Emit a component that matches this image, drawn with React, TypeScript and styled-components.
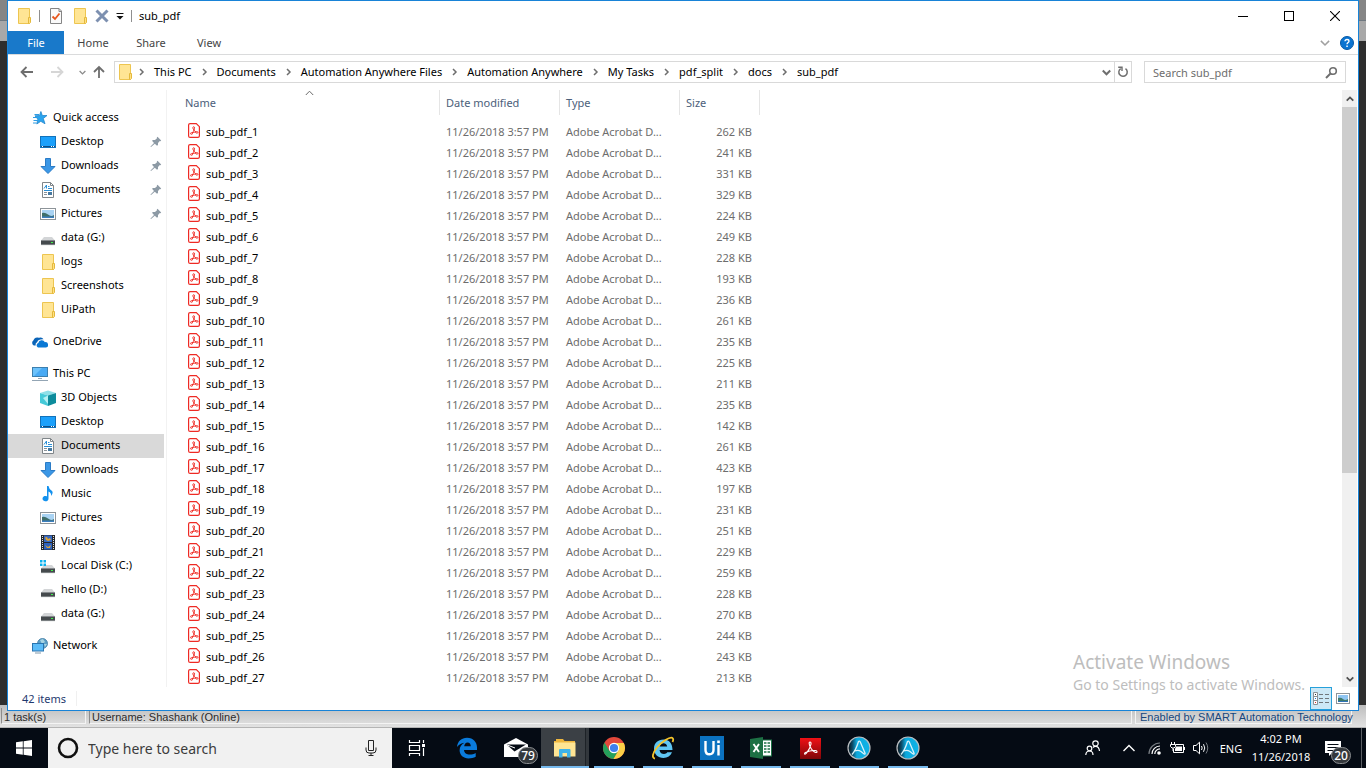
import React from "react";
import styled, { createGlobalStyle, css } from "styled-components";

const UI = `"Noto Sans", "Open Sans", sans-serif`;

const GlobalStyle = createGlobalStyle`
  *, *::before, *::after { box-sizing: border-box; }
  html, body { margin: 0; padding: 0; }
  body { font-family: ${UI}; font-size: 11px; color: #000; overflow: hidden; }
  button, input { font: inherit; color: inherit; margin: 0; padding: 0; border: 0; background: none; }
  a { color: inherit; text-decoration: none; }
  ul, ol { list-style: none; margin: 0; padding: 0; }
  svg { display: block; flex: none; }
`;

/* ---------- desktop and the application behind the window ---------- */

const Screen = styled.div`
  display: flex;
  flex-direction: column;
  height: 100vh;
  min-height: 400px;
`;

const Desktop = styled.div`
  position: relative;
  flex: 1;
  min-height: 0;
  display: flex;
  flex-direction: column;
  background: #2e2e2e;
`;

const BackToolbar = styled.div`
  height: 21px;
  background: #858585;
  border-bottom: 1px solid #6f7880;
`;

const BackTabs = styled.div`
  height: 20px;
  background: #a8a8a8;
`;

const BackCanvas = styled.div`
  flex: 1;
`;

const BackStatus = styled.footer`
  display: flex;
  gap: 3px;
  height: 23px;
  padding: 3px 14px 3px 1px;
  background: linear-gradient(#bdbdbd, #e2e2e2);
  border-bottom: 1px solid #b4b4b4;
  font-family: "Liberation Sans", Arial, sans-serif;
  font-size: 11px;
  line-height: 18px;
  color: #2b2b2b;
`;

const StatusCell = styled.div<{ $w?: number; $link?: boolean }>`
  ${(p) => (p.$w ? `width: ${p.$w}px; flex: none;` : "flex: 1;")}
  padding-left: ${(p) => (p.$link ? 4 : 2)}px;
  border-left: 1px solid #8c8c8c;
  border-right: 1px solid #f4f4f4;
  border-bottom: 1px solid #f4f4f4;
  white-space: nowrap;
  ${(p) => p.$link && "color: #16467c; border-left-color: #f4f4f4;"}
`;

/* ---------- explorer window ---------- */

const Window = styled.main`
  position: absolute;
  inset: 0 7px 17px 7px;
  display: flex;
  flex-direction: column;
  background: #fff;
  border: 1px solid #1883d7;
`;

const TitleBar = styled.header`
  display: flex;
  align-items: center;
  height: 30px;
  padding-left: 8px;
`;

const QuickTools = styled.div`
  display: flex;
  align-items: center;
  gap: 7px;
`;

const ToolButton = styled.button<{ $w?: number }>`
  display: flex;
  align-items: center;
  justify-content: center;
  width: ${(p) => p.$w ?? 16}px;
  height: 22px;
`;

const Divider = styled.span`
  width: 1px;
  height: 12px;
  background: #8f8f8f;
`;

const WindowTitle = styled.h1`
  margin: 0 0 0 7px;
  font-size: 11px;
  line-height: 16px;
  font-weight: 400;
`;

const WindowButtons = styled.div`
  display: flex;
  margin-left: auto;
`;

const WindowButton = styled.button`
  display: grid;
  place-items: center;
  width: 46px;
  height: 29px;
`;

const Ribbon = styled.nav`
  display: flex;
  align-items: center;
  height: 24px;
  border-bottom: 1px solid #dadbdc;
`;

const Tab = styled.button<{ $active?: boolean }>`
  height: 23px;
  width: ${(p) => (p.$active ? 56 : 58)}px;
  color: #444;
  ${(p) => p.$active && "background: #1979ca; color: #fff;"}
`;

const RibbonEnd = styled.div`
  display: flex;
  align-items: center;
  gap: 10px;
  margin-left: auto;
  padding-right: 4px;
`;

const AddressRow = styled.div`
  display: flex;
  align-items: center;
  height: 35px;
  padding: 0 12px 1px 11px;
`;

const NavButton = styled.button<{ $w: number }>`
  display: grid;
  place-items: center;
  width: ${(p) => p.$w}px;
  height: 22px;
`;

const AddressBox = styled.div`
  display: flex;
  align-items: center;
  flex: 1;
  min-width: 0;
  height: 22px;
  padding-left: 2px;
  border: 1px solid #d9d9d9;
`;

const Crumbs = styled.ol`
  display: flex;
  align-items: center;
  flex: 1;
  min-width: 0;
  margin-left: -4px;
  overflow: hidden;
  white-space: nowrap;
`;

const Crumb = styled.li`
  display: flex;
  align-items: center;
  line-height: 16px;
`;

const CrumbArrow = styled.svg`
  width: 25px;
  height: 8px;
`;

const RefreshButton = styled.button`
  display: grid;
  place-items: center;
  width: 17px;
  height: 20px;
  border-left: 1px solid #d9d9d9;
`;

const SearchBox = styled.label`
  display: flex;
  align-items: center;
  width: 202px;
  height: 22px;
  margin-left: 12px;
  padding: 0 7px 0 8px;
  border: 1px solid #d9d9d9;
`;

const SearchInput = styled.input`
  flex: 1;
  min-width: 0;
  outline: none;
  &::placeholder { color: #6d6d6d; opacity: 1; }
`;

const Body = styled.div`
  display: flex;
  flex: 1;
  min-height: 0;
`;

const Sidebar = styled.nav`
  display: flex;
  flex-direction: column;
  gap: 8px;
  width: 159px;
  padding: 16px 2px 0 0;
  border-right: 1px solid #f2f2f2;
  overflow: hidden;
`;

const NavLink = styled.a<{ $child?: boolean; $selected?: boolean }>`
  display: flex;
  align-items: center;
  gap: 5px;
  height: 24px;
  padding-left: ${(p) => (p.$child ? 32 : 24)}px;
  padding-right: 2px;
  white-space: nowrap;
  ${(p) => p.$selected && "background: #d9d9d9;"}
`;

const NavLabel = styled.span`
  line-height: 16px;
  padding-bottom: 2px;
`;

const Pin = styled.svg`
  margin-left: auto;
`;

const ListPane = styled.section`
  flex: 1;
  min-width: 0;
  overflow: hidden;
`;

const FileTable = styled.table`
  table-layout: fixed;
  width: 593px;
  border-collapse: separate;
  border-spacing: 0;
`;

const HeadCell = styled.th<{ $first?: boolean }>`
  position: relative;
  height: 25px;
  padding: 0 0 0 ${(p) => (p.$first ? 18 : 6)}px;
  border-right: 1px solid #e5e5e5;
  text-align: left;
  font-weight: 400;
  color: #4c607a;
`;

const SortMark = styled.svg`
  position: absolute;
  top: 0;
  right: 125px;
`;

const Cell = styled.td<{ $name?: boolean; $right?: boolean }>`
  height: 21px;
  padding: 0 8px 0 6px;
  line-height: 16px;
  white-space: nowrap;
  color: #6d6d6d;
  ${(p) => p.$name && "padding-left: 21px; color: #000;"}
  ${(p) => p.$right && "text-align: right;"}
`;

const RowSpacer = styled.td`
  height: 6px;
  padding: 0;
`;

const FileLink = styled.a`
  display: flex;
  align-items: center;
  gap: 6px;
`;

const Scrollbar = styled.div`
  display: flex;
  flex-direction: column;
  width: 15px;
  margin-right: 1px;
  background: #f0f0f0;
`;

const ScrollButton = styled.button`
  display: grid;
  place-items: center;
  height: 17px;
`;

const ScrollTrack = styled.div`
  flex: 1;
`;

const ScrollThumb = styled.div`
  height: 65%;
  background: #cdcdcd;
`;

const StatusBar = styled.footer`
  display: flex;
  align-items: center;
  height: 23px;
  padding: 0 4px 0 14px;
  color: #1f3a6e;
`;

const ItemCount = styled.span`
  padding-right: 10px;
  border-right: 1px solid #f0f0f0;
`;

const ViewSwitch = styled.div`
  display: flex;
  margin-left: auto;
`;

const ViewButton = styled.button<{ $on?: boolean }>`
  display: grid;
  place-items: center;
  width: 22px;
  height: 23px;
  ${(p) => p.$on && "background: #cce8f6; border: 1px solid #26a0da;"}
`;

const Watermark = styled.aside`
  position: absolute;
  right: 47px;
  bottom: 15px;
  width: 238px;
  color: #bdbdbd;
  font-size: 14px;
  line-height: 20px;
  white-space: nowrap;
  pointer-events: none;
`;

const WatermarkTitle = styled.strong`
  display: block;
  font-size: 19px;
  line-height: 25px;
  font-weight: 400;
`;

/* ---------- taskbar ---------- */

const Taskbar = styled.footer`
  display: flex;
  height: 40px;
  background: #050b14;
  color: #fff;
`;

const StartButton = styled.button`
  display: grid;
  place-items: center;
  width: 48px;
`;

const TaskSearch = styled.label`
  display: flex;
  align-items: center;
  gap: 8px;
  width: 344px;
  padding: 0 15px 0 8px;
  background: #f1f1f1;
`;

const TaskSearchInput = styled.input`
  flex: 1;
  min-width: 0;
  font-size: 14px;
  outline: none;
  &::placeholder { color: #3c3c3c; opacity: 1; }
`;

const Apps = styled.div`
  display: flex;
  gap: 1px;
  padding-left: 3px;
`;

const AppButton = styled.button<{ $open?: boolean; $active?: boolean }>`
  position: relative;
  display: grid;
  place-items: center;
  width: 48px;
  height: 40px;
  ${(p) => p.$active && "background: linear-gradient(90deg, #3b4045 44px, #1d2227 44px, #1d2227 45px, #32373c 45px);"}
  ${(p) =>
    (p.$open || p.$active) &&
    css`
      &::after {
        content: "";
        position: absolute;
        bottom: 0;
        left: ${p.$active ? 0 : 4}px;
        right: ${p.$active ? 0 : 4}px;
        height: 2px;
        background: #76b9ed;
      }
    `}
`;

const Badge = styled.span`
  position: absolute;
  right: 2px;
  bottom: 4px;
  min-width: 20px;
  height: 17px;
  padding: 0 2px;
  border: 1px solid #8b8e91;
  border-radius: 9px;
  background: #34383c;
  color: #fff;
  font-size: 12px;
  line-height: 15px;
  font-weight: 500;
  text-align: center;
`;

const Tray = styled.div`
  display: flex;
  align-items: center;
  margin-left: auto;
  padding-right: 4px;
`;

const TrayButton = styled.button<{ $w: number }>`
  position: relative;
  display: grid;
  place-items: center;
  width: ${(p) => p.$w}px;
  height: 40px;
  font-size: 11px;
`;

const Clock = styled.button`
  width: 64px;
  height: 40px;
  font-size: 11px;
  line-height: 18px;
  white-space: nowrap;
`;

const ShowDesktop = styled.button`
  width: 1px;
  height: 40px;
  margin-left: 8px;
  background: #5a5e63;
`;

/* ---------- icons ---------- */

const FolderIcon = () => (
  <svg width="16" height="16" viewBox="0 0 16 16">
    <path d="M2.500.5H13.500V15.500H2.500Z" fill="#ffe594" stroke="#edc550" />
    <path d="M12.500 9.500H14.500V14.500L13.500 15.500H12.500Z" fill="#ffe084" stroke="#e4b93c" />
  </svg>
);

const StarIcon = () => (
  <svg width="16" height="16" viewBox="0 0 16 16">
    <path d="M8.900 1.500 10.300 5.500 15 5.500 11.300 8.500 13 13.800 8.800 11.300 4.800 14 5.800 9.200 3 5.800 7.500 5.500Z" fill="#2ba4ee" stroke="#2387cd" strokeWidth=".8" />
    <path d="M2.500 4.500H7M1 7.500H5M1.500 10.500H5.500M1 13H4.500" stroke="#2d9ce4" strokeWidth="1.200" />
  </svg>
);

const DesktopIcon = () => (
  <svg width="16" height="16" viewBox="0 0 16 16">
    <rect x=".5" y="2.500" width="15" height="11" fill="#1ba0fb" stroke="#1272ba" />
    <path d="M1 12.500H15" stroke="#0d4d86" />
    <path d="M2 12.500H3M11 12.500H12M13 12.500H14" stroke="#fff" />
  </svg>
);

const DownloadsIcon = () => (
  <svg width="16" height="16" viewBox="0 0 16 16">
    <path d="M5.500.5H10.500V8.500H15L8 15.500 1 8.500H5.500Z" fill="#3b97e6" stroke="#2a7bc6" />
  </svg>
);

const DocumentsIcon = () => (
  <svg width="16" height="16" viewBox="0 0 16 16">
    <path d="M2.500.5H10.500L13.500 3.500V15.500H2.500Z" fill="#fff" stroke="#7f8589" />
    <path d="M10.500.5V3.500H13.500" fill="none" stroke="#7f8589" />
    <path d="M4 6.500 6.500 3V6.500M8 4.500H9.500M8 6.500H12M4 8.500H12" stroke="#2a8fd6" fill="none" />
    <path d="M4 10.500H7M4 12.500H7" stroke="#8a9299" />
    <rect x="8" y="10" width="4" height="3" fill="#47789e" />
  </svg>
);

const PicturesIcon = () => (
  <svg width="16" height="16" viewBox="0 0 16 16">
    <rect x=".5" y="2.500" width="15" height="11" fill="#fff" stroke="#8d9499" />
    <rect x="2" y="4" width="12" height="8" fill="#a9d3f3" />
    <path d="M2 7Q5 6 8 8.500T14 9V12H2Z" fill="#3f6f6b" />
    <path d="M2 10.500H14V12H2Z" fill="#3c7fc0" />
  </svg>
);

const Disk = () => (
  <g>
    <path d="M4 7H12L15 10.500H1Z" fill="#d3d5d7" />
    <rect x="1" y="10" width="14" height="5" fill="#454a4d" />
    <path d="M1 10.500H15M1 14.700H15" stroke="#a2a6a9" strokeWidth=".7" />
    <rect x="11" y="12" width="2" height="1" fill="#3ff04a" />
  </g>
);

const DriveIcon = () => (
  <svg width="16" height="16" viewBox="0 0 16 16">
    <Disk />
  </svg>
);

const SystemDriveIcon = () => (
  <svg width="16" height="16" viewBox="0 0 16 16">
    <Disk />
    <path d="M0 2H2.500V4.500H0ZM3.500 2H6V4.500H3.500ZM0 5.500H2.500V8H0ZM3.500 5.500H6V8H3.500Z" fill="#08b0ee" />
  </svg>
);

const OneDriveIcon = () => (
  <svg width="16" height="16" viewBox="0 0 16 16">
    <path d="M1.800 11.500A3 3 0 0 1 1.500 6.300 4 4 0 0 1 7 3.800 3.500 3.500 0 0 1 11.500 5.300Q6 5 5.300 8 3 9 3.600 11.500Z" fill="#0a64b8" />
    <path d="M6 13.500A2.400 2.400 0 0 1 6.300 9 3.500 3.500 0 0 1 12.900 8.200 2.700 2.700 0 0 1 14 13.500Z" fill="#0a78d4" />
  </svg>
);

const ThisPcIcon = () => (
  <svg width="16" height="16" viewBox="0 0 16 16">
    <rect x=".5" y="1.500" width="15" height="9" fill="#6cc2fb" stroke="#3c7fae" />
    <path d="M2 10 10 2H15V10Z" fill="#49aaf4" />
    <path d="M6 12.500H10M0 14.500H16" stroke="#93a5b4" />
  </svg>
);

const CubeIcon = () => (
  <svg width="16" height="16" viewBox="0 0 16 16">
    <path d="M0 3 8 .5 16 3 8 5.500Z" fill="#8fe0e8" />
    <path d="M0 3 8 5.500V16L0 13Z" fill="#45cad8" />
    <path d="M16 3 8 5.500V16L16 13Z" fill="#0d8c9c" />
    <path d="M3 8 8 5.500V14Z" fill="#b5f1f4" />
  </svg>
);

const MusicIcon = () => (
  <svg width="16" height="16" viewBox="0 0 16 16">
    <path d="M7 0H8.500Q9 3 11.500 4.500T11 10Q11.500 6.500 8.500 5.500V12.500A3 2.700 0 1 1 7 10.300Z" fill="#1391ee" />
  </svg>
);

const VideosIcon = () => (
  <svg width="16" height="16" viewBox="0 0 16 16">
    <rect x="1" y="1" width="14" height="15" fill="#26282b" />
    <path d="M2.500 2V15M13.500 2V15" stroke="#e0e0e0" strokeDasharray="1 1" />
    <rect x="4" y="1.500" width="8" height="6.500" fill="#3569c4" />
    <rect x="4" y="9" width="8" height="6.500" fill="#2d62bd" />
    <path d="M5 3.500 7 3 8 5 10 4 11 6 8 7 6 6ZM5 11 8 13 11 11 10 14H7Z" fill="#dca33a" />
  </svg>
);

const NetworkIcon = () => (
  <svg width="16" height="16" viewBox="0 0 16 16">
    <circle cx="10.500" cy="5.500" r="5" fill="#5b9ec6" stroke="#3f7ba3" strokeWidth=".8" />
    <path d="M8 2 11 1 13 4 10 6ZM12 6 15 6 13 9Z" fill="#a8d4e2" />
    <rect x=".5" y="5.500" width="11" height="7.500" fill="#5cbcf8" stroke="#2a75b0" />
    <path d="M3 15H9" stroke="#8199aa" />
  </svg>
);

const PinIcon = () => (
  <Pin width="12" height="12" viewBox="0 0 12 12">
    <path d="M7.500.8 11.200 4.500 10.500 5.200 9.800 5 8 7 8 9 7 9.800 4.800 7.800 1 11 .5 11 .8 10.200 4 7 2 4.800 3 4 5 4 7 2.200 6.800 1.400Z" fill="#8d9aa5" />
  </Pin>
);

const PdfFileIcon = () => (
  <svg width="12" height="17" viewBox="0 0 12 17">
    <path d="M2.500.6H8.300L11.400 3.700V13Q11.400 14.400 9.900 14.400H2.100Q.6 14.400.6 12.900V2.100Q.6.6 2.100.6Z" fill="#fff" stroke="#ee2a24" strokeWidth="1.200" />
    <g fill="none" stroke="#ee2a24" strokeWidth=".9">
      <ellipse cx="5.700" cy="4.900" rx=".9" ry="1.200" />
      <path d="M5.700 6Q6.200 8 8 9M6.200 6Q5.800 8.500 4 10.200M4 10Q6 8.900 8 9" />
      <ellipse cx="3.500" cy="10.500" rx="1" ry=".8" />
      <ellipse cx="8.900" cy="9.400" rx="1.100" ry=".8" />
    </g>
  </svg>
);

const PropertiesIcon = () => (
  <svg width="16" height="16" viewBox="0 0 16 16">
    <path d="M2.500.5H11L13.500 3V15.500H2.500Z" fill="#fafafa" stroke="#858585" />
    <path d="M11 .5V3.500H13.500" fill="none" stroke="#858585" />
    <path d="M4.500 8.500 7 11 11.500 5.500" fill="none" stroke="#e8571d" strokeWidth="1.800" />
  </svg>
);

const Chevron = ({ dir = "down", size = 8, color = "#6e6e6e", weight = 1.5 }: { dir?: "down" | "up"; size?: number; color?: string; weight?: number }) => (
  <svg width={size} height={size} viewBox="0 0 8 8">
    <path d={dir === "down" ? "M.7 2.300 4 5.600 7.300 2.300" : "M.7 5.700 4 2.400 7.300 5.700"} fill="none" stroke={color} strokeWidth={weight} />
  </svg>
);

const Separator = () => (
  <CrumbArrow viewBox="0 0 25 8">
    <path d="M11 1 14 4 11 7" fill="none" stroke="#6e6e6e" strokeWidth="1.500" />
  </CrumbArrow>
);

const ArrowIcon = ({ dir, color }: { dir: "left" | "right"; color: string }) => (
  <svg width="14" height="12" viewBox="0 0 14 12">
    <path d={dir === "left" ? "M13 6H2M6.500 1 1.500 6 6.500 11" : "M1 6H12M7.500 1 12.500 6 7.500 11"} fill="none" stroke={color} strokeWidth="1.800" />
  </svg>
);

const HelpIcon = () => (
  <svg width="14" height="14" viewBox="0 0 14 14">
    <circle cx="7" cy="7" r="6.500" fill="#0b74d1" stroke="#0759a5" />
    <path d="M5 5.200Q5 3.500 7 3.500T9 5.200C9 6.500 7 6.600 7 8.300" fill="none" stroke="#fff" strokeWidth="1.300" />
    <rect x="6.300" y="9.500" width="1.500" height="1.500" fill="#fff" />
  </svg>
);

const AutomationIcon = ({ id }: { id: string }) => (
  <svg width="24" height="24" viewBox="0 0 24 24">
    <defs>
      <linearGradient id={id}>
        <stop offset="0" stopColor="#0a1016" />
        <stop offset=".2" stopColor="#0c4a66" />
        <stop offset=".4" stopColor="#0ca9dd" />
        <stop offset="1" stopColor="#0fb4e8" />
      </linearGradient>
    </defs>
    <circle cx="12" cy="12" r="11" fill={`url(#${id})`} stroke="#b9bdc0" strokeWidth="1.200" />
    <path d="M5 18.500Q9 14 11.500 5.500Q12.500 4.500 13.300 6L18 17Q18.500 18.500 17 18L14 15.500Q11 13.500 8 15" fill="none" stroke="#d9f3fb" strokeWidth="1.300" />
  </svg>
);

/* ---------- data ---------- */

type NavItem = { label: string; icon: React.FC; pinned?: boolean; selected?: boolean };
type NavGroup = { head: NavItem; items: NavItem[] };

const groups: NavGroup[] = [
  {
    head: { label: "Quick access", icon: StarIcon },
    items: [
      { label: "Desktop", icon: DesktopIcon, pinned: true },
      { label: "Downloads", icon: DownloadsIcon, pinned: true },
      { label: "Documents", icon: DocumentsIcon, pinned: true },
      { label: "Pictures", icon: PicturesIcon, pinned: true },
      { label: "data (G:)", icon: DriveIcon },
      { label: "logs", icon: FolderIcon },
      { label: "Screenshots", icon: FolderIcon },
      { label: "UiPath", icon: FolderIcon },
    ],
  },
  { head: { label: "OneDrive", icon: OneDriveIcon }, items: [] },
  {
    head: { label: "This PC", icon: ThisPcIcon },
    items: [
      { label: "3D Objects", icon: CubeIcon },
      { label: "Desktop", icon: DesktopIcon },
      { label: "Documents", icon: DocumentsIcon, selected: true },
      { label: "Downloads", icon: DownloadsIcon },
      { label: "Music", icon: MusicIcon },
      { label: "Pictures", icon: PicturesIcon },
      { label: "Videos", icon: VideosIcon },
      { label: "Local Disk (C:)", icon: SystemDriveIcon },
      { label: "hello (D:)", icon: DriveIcon },
      { label: "data (G:)", icon: DriveIcon },
    ],
  },
  { head: { label: "Network", icon: NetworkIcon }, items: [] },
];

const path = ["This PC", "Documents", "Automation Anywhere Files", "Automation Anywhere", "My Tasks", "pdf_split", "docs", "sub_pdf"];

const sizes = [262, 241, 331, 329, 224, 249, 228, 193, 236, 261, 235, 225, 211, 235, 142, 261, 423, 197, 231, 251, 229, 259, 228, 270, 244, 243, 213];

const NavRow = ({ item, child }: { item: NavItem; child?: boolean }) => (
  <NavLink href="#" $child={child} $selected={item.selected}>
    <item.icon />
    <NavLabel>{item.label}</NavLabel>
    {item.pinned && <PinIcon />}
  </NavLink>
);

/* ---------- sections ---------- */

const Header = () => (
  <>
    <TitleBar>
      <QuickTools>
        <ToolButton aria-label="Window menu"><FolderIcon /></ToolButton>
        <Divider />
        <ToolButton $w={18} aria-label="Properties"><PropertiesIcon /></ToolButton>
        <ToolButton aria-label="New folder"><FolderIcon /></ToolButton>
        <ToolButton $w={14} aria-label="Delete">
          <svg width="14" height="14" viewBox="0 0 14 14"><path d="M1.500 1.500 12.500 12.500M12.500 1.500 1.500 12.500" stroke="#7d90b0" strokeWidth="3" /></svg>
        </ToolButton>
        <ToolButton $w={8} aria-label="Customize toolbar">
          <svg width="8" height="8" viewBox="0 0 8 8"><path d="M.5 1.500H7.500" stroke="#111" /><path d="M.5 4H7.500L4 7.500Z" fill="#111" /></svg>
        </ToolButton>
        <Divider />
      </QuickTools>
      <WindowTitle>sub_pdf</WindowTitle>
      <WindowButtons>
        <WindowButton aria-label="Minimize"><svg width="10" height="10"><path d="M0 5.500H10" stroke="#000" /></svg></WindowButton>
        <WindowButton aria-label="Maximize"><svg width="10" height="10"><rect x=".5" y=".5" width="9" height="9" fill="none" stroke="#000" /></svg></WindowButton>
        <WindowButton aria-label="Close"><svg width="10" height="10"><path d="M0 0 10 10M10 0 0 10" stroke="#000" strokeWidth="1.100" /></svg></WindowButton>
      </WindowButtons>
    </TitleBar>
    <Ribbon>
      <Tab $active>File</Tab>
      <Tab>Home</Tab>
      <Tab>Share</Tab>
      <Tab>View</Tab>
      <RibbonEnd>
        <ToolButton $w={10} aria-label="Expand the ribbon"><Chevron size={10} color="#a0a0a0" weight={1.2} /></ToolButton>
        <ToolButton $w={14} aria-label="Help"><HelpIcon /></ToolButton>
      </RibbonEnd>
    </Ribbon>
    <AddressRow>
      <NavButton $w={16} aria-label="Back"><ArrowIcon dir="left" color="#6e6e6e" /></NavButton>
      <NavButton $w={44} aria-label="Forward"><ArrowIcon dir="right" color="#d6d6d6" /></NavButton>
      <NavButton $w={4} aria-label="Recent locations"><Chevron size={7} color="#8a8a8a" /></NavButton>
      <NavButton $w={31} aria-label="Up">
        <svg width="12" height="14" viewBox="0 0 12 14"><path d="M6 13V2M1 7 6 2 11 7" fill="none" stroke="#6e6e6e" strokeWidth="1.800" /></svg>
      </NavButton>
      <AddressBox>
        <FolderIcon />
        <Crumbs>
          {path.map((p) => (
            <Crumb key={p}>
              <Separator />
              <a href="#">{p}</a>
            </Crumb>
          ))}
        </Crumbs>
        <ToolButton aria-label="Previous locations"><Chevron size={9} weight={1.8} /></ToolButton>
        <RefreshButton aria-label="Refresh">
          <svg width="12" height="12" viewBox="0 0 12 12">
            <path d="M8.500 2.700A4.200 4.200 0 1 1 3.700 2.600" fill="none" stroke="#6e6e6e" strokeWidth="1.500" />
            <path d="M1.200 1.300H5V5" fill="none" stroke="#6e6e6e" strokeWidth="1.400" />
          </svg>
        </RefreshButton>
      </AddressBox>
      <SearchBox>
        <SearchInput aria-label="Search sub_pdf" placeholder="Search sub_pdf" />
        <svg width="13" height="13" viewBox="0 0 13 13">
          <circle cx="8" cy="5" r="3.300" fill="none" stroke="#6e6e6e" strokeWidth="1.600" />
          <path d="M5.500 7.500 1 12" stroke="#6e6e6e" strokeWidth="2" />
        </svg>
      </SearchBox>
    </AddressRow>
  </>
);

const Files = () => (
  <ListPane>
    <FileTable>
      <colgroup>
        <col style={{ width: 273 }} />
        <col style={{ width: 120 }} />
        <col style={{ width: 120 }} />
        <col style={{ width: 80 }} />
      </colgroup>
      <thead>
        <tr>
          <HeadCell $first>
            <button>Name</button>
            <SortMark width="9" height="6" viewBox="0 0 9 6"><path d="M.8 5 4.500 1.200 8.200 5" fill="none" stroke="#6a6a6a" /></SortMark>
          </HeadCell>
          <HeadCell><button>Date modified</button></HeadCell>
          <HeadCell><button>Type</button></HeadCell>
          <HeadCell><button>Size</button></HeadCell>
        </tr>
      </thead>
      <tbody>
        <tr aria-hidden="true"><RowSpacer colSpan={4} /></tr>
        {sizes.map((size, i) => (
          <tr key={i}>
            <Cell $name><FileLink href="#"><PdfFileIcon />{`sub_pdf_${i + 1}`}</FileLink></Cell>
            <Cell>11/26/2018 3:57 PM</Cell>
            <Cell>Adobe Acrobat D...</Cell>
            <Cell $right>{size} KB</Cell>
          </tr>
        ))}
      </tbody>
    </FileTable>
  </ListPane>
);

const TaskbarSection = () => (
  <Taskbar>
    <StartButton aria-label="Start">
      <svg width="16" height="16" viewBox="0 0 16 16"><path d="M0 2.200 6.800 1.300V7.500H0ZM7.600 1.200 16 0V7.500H7.600ZM0 8.400H6.800V14.700L0 13.800ZM7.600 8.400H16V16L7.600 14.800Z" fill="#fff" /></svg>
    </StartButton>
    <TaskSearch>
      <svg width="24" height="24" viewBox="0 0 24 24"><circle cx="12" cy="12" r="9" fill="none" stroke="#111" strokeWidth="2.600" /></svg>
      <TaskSearchInput aria-label="Type here to search" placeholder="Type here to search" />
      <svg width="12" height="16" viewBox="0 0 12 16"><path d="M3.500.5H8.500V10.500H3.500ZM1 7.500V10Q1 13 4 13H8Q11 13 11 10V7.500M6 13V15.500M3.500 15.500H8.500" fill="none" stroke="#222" /></svg>
    </TaskSearch>
    <AppButton aria-label="Task View">
      <svg width="17" height="16" viewBox="0 0 17 16"><path d="M1.500 0V2.500H11.500V0M1.500 5.500H11.500V10.500H1.500ZM1.500 16V13.500H11.500V16M15.500 0V3M15.500 8V16" fill="none" stroke="#fff" strokeWidth="1.200" /><rect x="14" y="4" width="3" height="3" fill="#fff" /></svg>
    </AppButton>
    <Apps>
      <AppButton aria-label="Edge">
        <svg width="22" height="22" viewBox="0 0 22 22"><path d="M1 10C1.500 4.500 5.500.8 11 .8 17.500.8 21 5.500 21 10.500V13H8C8.200 16.300 11 17.600 13.500 17.600 16 17.600 18 16.900 19.700 15.900V19.700C17.600 20.900 15.300 21.400 12.500 21.400 7.500 21.400 3.600 18 3.600 13.200 3.600 9.600 5.700 7 8.400 5.700 5 6 2.600 7.700 1 10ZM8.200 9.300H14.800C14.800 7 13.500 5.600 11.600 5.600 9.700 5.600 8.500 7.300 8.200 9.300Z" fill="#0a7bdc" fillRule="evenodd" /></svg>
      </AppButton>
      <AppButton aria-label="Mail">
        <svg width="24" height="20" viewBox="0 0 24 20"><path d="M0 6.500 12 0 24 6.500V19H0Z" fill="#fff" /><path d="M2.500 6.500H22L10.500 13.500Z" fill="#050b14" /><path d="M2 6.500 11 10" stroke="#fff" /></svg>
        <Badge>79</Badge>
      </AppButton>
      <AppButton $active aria-label="File Explorer">
        <svg width="22" height="19" viewBox="0 0 22 19"><path d="M0 2H2V0H9L10.500 2H21V6H0Z" fill="#efb73e" /><path d="M0 3.500H21.500V17.500H0Z" fill="#ffe593" /><path d="M5 18.500V11Q5 10 6 10H15.500Q16.500 10 16.500 11V18.500H13V14H8.500V18.500Z" fill="#3fb3e8" /></svg>
      </AppButton>
      <AppButton $open aria-label="Chrome">
        <svg width="22" height="22" viewBox="0 0 22 22"><circle cx="11" cy="11" r="11" fill="#e2483b" /><path d="M1.500 5.500A11 11 0 0 0 10.500 22L15.500 13.500 11 11 6.500 14Z" fill="#24a05b" /><path d="M11 6H20.800A11 11 0 0 1 10.500 22L15.500 13.500Z" fill="#fcd047" /><circle cx="11" cy="11" r="5.200" fill="#fff" /><circle cx="11" cy="11" r="4.100" fill="#3f80ed" /></svg>
      </AppButton>
      <AppButton $open aria-label="Internet Explorer">
        <svg width="24" height="24" viewBox="0 0 24 24"><path d="M3 12.500C3 7 7 3.500 12.500 3.500S21.500 7.500 21.500 14H8.500C9 17 11 18 13 18 14.500 18 15.700 17.400 16.300 16.300H21C19.500 20 16.500 22 12.500 22 7 22 3 18.200 3 12.500ZM8.600 10.600H16.200C15.800 8.300 14.300 7.300 12.400 7.300S9 8.300 8.600 10.600Z" fill="#5fc6f3" fillRule="evenodd" /><path d="M4 22.500C.5 22 1.500 17 6 11.500 11 5.500 18.500.8 21.200 1.800 22.500 2.300 22.500 4 21.500 6" fill="none" stroke="#f5c52c" strokeWidth="1.800" /></svg>
      </AppButton>
      <AppButton $open aria-label="UiPath">
        <svg width="24" height="24" viewBox="0 0 24 24"><rect width="24" height="24" fill="#0b72c0" /><path d="M5.500 5V14Q5.500 18.300 9.500 18.300T13.500 14V5M18.500 9V19.500" fill="none" stroke="#fff" strokeWidth="2.400" /><rect x="17.200" y="4.500" width="2.600" height="2.600" fill="#fff" /></svg>
      </AppButton>
      <AppButton $open aria-label="Excel">
        <svg width="22" height="22" viewBox="0 0 22 22"><rect x="12" y="3" width="9.500" height="16" fill="#fff" stroke="#1c7245" /><path d="M14 6H20M14 9H20M14 12H20M14 15H20" stroke="#1c7245" strokeWidth="1.400" /><path d="M17 4V18" stroke="#fff" /><path d="M0 2 13 0V22L0 20Z" fill="#1d7044" /><path d="M3.500 7 9 15M9 7 3.500 15" stroke="#fff" strokeWidth="1.900" /></svg>
      </AppButton>
      <AppButton $open aria-label="Acrobat">
        <svg width="21" height="21" viewBox="0 0 21 21"><defs><linearGradient id="acro" x2="0" y2="1"><stop offset="0" stopColor="#f01015" /><stop offset="1" stopColor="#7f0609" /></linearGradient></defs><rect width="21" height="21" fill="url(#acro)" /><path d="M10 4C8.500 4 9.300 7 10.300 9 11.700 11.800 14 14 15.700 14.500 17.500 14.800 17.500 12.800 15.500 12.500 12 12.200 8.500 13 5.500 14.500 3.500 15.800 5 17 6.600 15 8.500 12.500 10.500 9 11 6.200 11.100 4.800 10.800 4 10 4Z" fill="none" stroke="#fff" strokeWidth="1.100" /></svg>
      </AppButton>
      <AppButton $open aria-label="Automation Anywhere Client"><AutomationIcon id="aa1" /></AppButton>
      <AppButton $open aria-label="Automation Anywhere Workbench"><AutomationIcon id="aa2" /></AppButton>
    </Apps>
    <Tray>
      <TrayButton $w={44} aria-label="People">
        <svg width="16" height="16" viewBox="0 0 16 16"><g fill="none" stroke="#fff" strokeWidth="1.200"><circle cx="10.500" cy="3.500" r="2.700" /><circle cx="4.500" cy="8.500" r="2.300" /><path d="M.8 15Q1 11 4.500 11T8 15M8 7.500Q9 6.300 10.500 6.300 14 6.300 14.500 11" /></g></svg>
      </TrayButton>
      <TrayButton $w={28} aria-label="Hidden icons"><svg width="12" height="8" viewBox="0 0 12 8"><path d="M.5 7 6 1.500 11.500 7" fill="none" stroke="#fff" strokeWidth="1.400" /></svg></TrayButton>
      <TrayButton $w={23} aria-label="Network">
        <svg width="13" height="13" viewBox="0 0 13 13"><g fill="none" strokeWidth="1.200"><path d="M1 12A11 11 0 0 1 12 1" stroke="#777c82" /><path d="M4 12A8 8 0 0 1 12 4" stroke="#fff" /><path d="M6.800 12A5.200 5.200 0 0 1 12 6.800" stroke="#fff" /></g><circle cx="11" cy="11" r="1.800" fill="#fff" /></svg>
      </TrayButton>
      <TrayButton $w={23} aria-label="Battery">
        <svg width="16" height="12" viewBox="0 0 16 12"><path d="M5.500 2.500H13.500V10.500H3.500V7M14.500 5V8" fill="none" stroke="#fff" /><path d="M6 4.500H12V9H5V7Z" fill="#fff" /><path d="M1.500 0V2M4.500 0V2M.5 2.500H5.500V4.500L4 6H2L.5 4.500ZM3 6V9" fill="none" stroke="#fff" /></svg>
      </TrayButton>
      <TrayButton $w={24} aria-label="Volume">
        <svg width="16" height="14" viewBox="0 0 16 14"><g fill="none" stroke="#fff"><path d="M.5 4.500H3L6.500 1.200V12.800L3 9.500H.5Z" /><path d="M8.500 5Q9.800 7 8.500 9M10.500 3.200Q13 7 10.500 10.800" /><path d="M13 1.500Q16.500 7 13 12.500" stroke="#777c82" /></g></svg>
      </TrayButton>
      <TrayButton $w={36}>ENG</TrayButton>
      <Clock>4:02 PM<br />11/26/2018</Clock>
      <TrayButton $w={40} aria-label="Notifications">
        <svg width="16" height="15" viewBox="0 0 16 15"><path d="M0 0H16V12H7L4 15V12H0Z" fill="#fff" /><path d="M2.500 3.500H13.500M2.500 6.500H13.500M2.500 9.500H10" stroke="#050b14" /></svg>
        <Badge>20</Badge>
      </TrayButton>
      <ShowDesktop aria-label="Show desktop" />
    </Tray>
  </Taskbar>
);

export default function App() {
  return (
    <Screen>
      <GlobalStyle />
      <Desktop>
        <BackToolbar />
        <BackTabs />
        <BackCanvas />
        <BackStatus>
          <StatusCell $w={85}>1 task(s)</StatusCell>
          <StatusCell>Username: Shashank (Online)</StatusCell>
          <StatusCell $w={217} $link>Enabled by SMART Automation Technology</StatusCell>
        </BackStatus>
        <Window>
          <Header />
          <Body>
            <Sidebar aria-label="Folders">
              {groups.map((g) => (
                <ul key={g.head.label}>
                  <li><NavRow item={g.head} /></li>
                  {g.items.map((item) => (
                    <li key={item.label}><NavRow item={item} child /></li>
                  ))}
                </ul>
              ))}
            </Sidebar>
            <Files />
            <Scrollbar>
              <ScrollButton aria-label="Scroll up"><Chevron dir="up" weight={1.8} color="#505050" /></ScrollButton>
              <ScrollTrack><ScrollThumb /></ScrollTrack>
              <ScrollButton aria-label="Scroll down"><Chevron weight={1.8} color="#505050" /></ScrollButton>
            </Scrollbar>
          </Body>
          <StatusBar>
            <ItemCount>42 items</ItemCount>
            <ViewSwitch>
              <ViewButton $on aria-label="Details view">
                <svg width="16" height="13" viewBox="0 0 16 13"><path d="M.5.5H4.500V12.500H.5ZM.5 4.500H4.500M.5 8.500H4.500" fill="#fff" stroke="#8b9297" /><path d="M6 2.500H10M12 2.500H16M6 6.500H10M12 6.500H16M6 10.500H10M12 10.500H16" stroke="#70777c" /><rect x="2" y="2" width="1" height="1" fill="#333" /><rect x="2" y="6" width="1" height="1" fill="#1976d2" /><rect x="2" y="10" width="1" height="1" fill="#e02a1f" /></svg>
              </ViewButton>
              <ViewButton aria-label="Large thumbnails view"><svg width="14" height="11" viewBox="0 0 14 11"><rect x=".5" y=".5" width="13" height="10" fill="#fff" stroke="#8d9499" /><path d="M2 2H12V9H2Z" fill="#8fc5f2" /><path d="M2 5Q5 4 7 6T12 6V9H2Z" fill="#3f7a6b" /><path d="M2 8H12V9H2Z" fill="#2f73b8" /></svg></ViewButton>
            </ViewSwitch>
          </StatusBar>
          <Watermark>
            <WatermarkTitle>Activate Windows</WatermarkTitle>
            Go to Settings to activate Windows.
          </Watermark>
        </Window>
      </Desktop>
      <TaskbarSection />
    </Screen>
  );
}
